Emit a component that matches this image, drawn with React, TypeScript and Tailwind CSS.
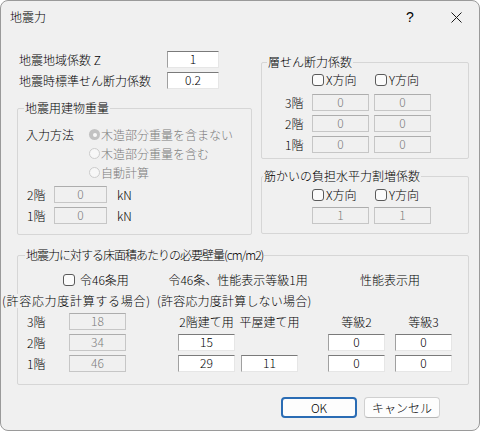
import React from "react";

const font = "font-['Noto_Sans_CJK_JP','Noto_Sans_CJK_SC',sans-serif]";

function Edit({ value, className = "", disabled = false }: { value: string; className?: string; disabled?: boolean }) {
  const look = disabled
    ? "bg-[#f0f0f0] border border-[#c6c6c6] border-t-[#adadad] text-[#7c7c7c]"
    : "bg-white border border-t-[#7a7a7a] border-l-[#a0a0a0] border-r-[#e6e6e6] border-b-[#e6e6e6] text-black";
  return (
    <div className={`h-[17px] flex items-center justify-center pb-[2px] leading-[14px] ${look} ${className}`}>
      {value}
    </div>
  );
}

function Check({ label }: { label: string }) {
  return (
    <div className="flex items-center whitespace-nowrap">
      <span className="w-[12px] h-[12px] rounded-[3px] border border-[#5a5a5a] bg-[#fbfbfb]" />
      <span className="ml-[2px]">{label}</span>
    </div>
  );
}

function Radio({ label, checked = false }: { label: string; checked?: boolean }) {
  return (
    <div className="flex items-center h-[19px]">
      {checked ? (
        <span className="w-[11px] h-[11px] rounded-full bg-[#c2c2c2] flex items-center justify-center">
          <span className="w-[4px] h-[4px] rounded-full bg-[#f8f8f8]" />
        </span>
      ) : (
        <span className="w-[11px] h-[11px] rounded-full border border-[#cccccc] bg-[#f7f7f7]" />
      )}
      <span className="ml-[1px] text-[#7c7c7c]">{label}</span>
    </div>
  );
}

function Group({ title, titleCls, className, children }: { title: string; titleCls: string; className: string; children: React.ReactNode }) {
  return (
    <div className={`relative border border-[#d6d6d6] rounded-[2px] ${className}`}>
      <span className={`absolute top-[-8px] px-[1px] bg-[#f0f0f0] leading-[14px] whitespace-nowrap ${titleCls}`}>{title}</span>
      {children}
    </div>
  );
}

export default function App() {
  return (
    <div className={`w-[480px] h-[431px] bg-white ${font} font-light text-[12px] leading-[14px] text-black`}>
      <div className="w-full h-full rounded-[8px] border border-[#9a9a9a] bg-[#f0f0f0] overflow-hidden flex flex-col">
        {/* title bar */}
        <div className="h-[32px] shrink-0 flex items-center">
          <span className="ml-[9px]">地震力</span>
          <div className="ml-auto flex h-[30px]">
            <div className="w-[46px] flex items-center justify-center font-['Liberation_Sans',sans-serif] text-[14px]">?</div>
            <div className="w-[46px] flex items-center justify-center">
              <svg width="11" height="11" viewBox="0 0 11 11">
                <path d="M0.5 0.5 L10.5 10.5 M10.5 0.5 L0.5 10.5" stroke="#1a1a1a" strokeWidth="1" fill="none" />
              </svg>
            </div>
          </div>
        </div>

        {/* upper part */}
        <div className="flex ml-[16px]">
          <div className="w-[235px] flex flex-col">
            <div className="mt-[18px] flex items-center h-[17px]">
              <span className="w-[150px] pl-[2px] whitespace-nowrap">地震地域係数 Z</span>
              <Edit value="1" className="w-[52px]" />
            </div>
            <div className="mt-[4px] flex items-center h-[17px]">
              <span className="w-[150px] pl-[2px] whitespace-nowrap">地震時標準せん断力係数</span>
              <Edit value="0.2" className="w-[52px]" />
            </div>

            <Group title="地震用建物重量" titleCls="left-[6px]" className="mt-[19px] h-[127px]">
              <div className="pt-[16px] pl-[8px]">
                <div className="flex items-center">
                  <span className="w-[63px]">入力方法</span>
                  <Radio label="木造部分重量を含まない" checked />
                </div>
                <div className="pl-[63px]">
                  <Radio label="木造部分重量を含む" />
                  <Radio label="自動計算" />
                </div>
              </div>
              <div className="mt-[4px] flex flex-col gap-[4px]">
                {["2階", "1階"].map((f) => (
                  <div key={f} className="flex items-center h-[17px]">
                    <span className="w-[36px] pl-[9px]">{f}</span>
                    <Edit disabled value="0" className="w-[53px]" />
                    <span className="ml-[10px]">kN</span>
                  </div>
                ))}
              </div>
            </Group>
          </div>

          <div className="ml-[9px] w-[208px] flex flex-col">
            <Group title="層せん断力係数" titleCls="left-[5px]" className="mt-[29px] h-[97px]">
              <div className="pt-[8px]">
                <div className="flex items-center h-[18px] pl-[50px]">
                  <div className="w-[63px]">
                    <Check label="X方向" />
                  </div>
                  <Check label="Y方向" />
                </div>
                <div className="mt-[5px] flex flex-col gap-[4px]">
                  {["3階", "2階", "1階"].map((f) => (
                    <div key={f} className="flex items-center h-[17px]">
                      <span className="w-[50px] pl-[23px]">{f}</span>
                      <Edit disabled value="0" className="w-[57px]" />
                      <Edit disabled value="0" className="w-[57px] ml-[5px]" />
                    </div>
                  ))}
                </div>
              </div>
            </Group>

            <Group title="筋かいの負担水平力割増係数" titleCls="left-[1px]" className="mt-[17px] h-[58px]">
              <div className="pt-[9px]">
                <div className="flex items-center h-[18px] pl-[50px]">
                  <div className="w-[63px]">
                    <Check label="X方向" />
                  </div>
                  <Check label="Y方向" />
                </div>
                <div className="mt-[3px] flex items-center h-[17px] pl-[50px]">
                  <Edit disabled value="1" className="w-[57px]" />
                  <Edit disabled value="1" className="w-[57px] ml-[5px]" />
                </div>
              </div>
            </Group>
          </div>
        </div>

        {/* required wall amount */}
        <Group title="地震力に対する床面積あたりの必要壁量(cm/m2)" titleCls="left-[7px] tracking-[-1px]" className="mt-[20px] ml-[16px] w-[452px] h-[130px] shrink-0">
          <div className="pt-[13px]">
            <div className="flex items-center h-[21px]">
              <div className="w-[160px] pl-[45px] flex items-center">
                <span className="w-[12px] h-[12px] rounded-[3px] border border-[#5a5a5a] bg-[#fbfbfb]" />
                <span className="ml-[5px]">令46条用</span>
              </div>
              <div className="w-[120px] flex justify-center whitespace-nowrap">令46条、性能表示等級1用</div>
              <div className="w-[30px]" />
              <div className="w-[124px] flex justify-center whitespace-nowrap">性能表示用</div>
            </div>
            <div className="flex items-center h-[21px] ml-[-16px]">
              <span className="w-[155px] whitespace-nowrap bg-[#f0f0f0] tracking-[0.7px]">(許容応力度計算する場合)</span>
              <span className="whitespace-nowrap tracking-[0.2px]">(許容応力度計算しない場合)</span>
            </div>
            <div className="grid grid-cols-[51px_57px_52px_57px_6px_57px_30px_57px_10px_57px] grid-rows-[21px_21px_21px] items-center">
              <span className="pl-[9px]">3階</span>
              <Edit disabled value="18" />
              <span />
              <span className="flex justify-center whitespace-nowrap">2階建て用</span>
              <span />
              <span className="flex justify-center whitespace-nowrap">平屋建て用</span>
              <span />
              <span className="flex justify-center whitespace-nowrap">等級2</span>
              <span />
              <span className="flex justify-center whitespace-nowrap">等級3</span>

              <span className="pl-[9px]">2階</span>
              <Edit disabled value="34" />
              <span />
              <Edit value="15" />
              <span />
              <span />
              <span />
              <Edit value="0" />
              <span />
              <Edit value="0" />

              <span className="pl-[9px]">1階</span>
              <Edit disabled value="46" />
              <span />
              <Edit value="29" />
              <span />
              <Edit value="11" />
              <span />
              <Edit value="0" />
              <span />
              <Edit value="0" />
            </div>
          </div>
        </Group>

        {/* buttons */}
        <div className="mt-[12px] flex justify-end gap-[7px] pr-[39px]">
          <button className="w-[76px] h-[21px] rounded-[4px] border-2 border-[#2a6cb4] bg-[#fdfdfd] flex items-center justify-center leading-[14px]">OK</button>
          <button className="w-[76px] h-[21px] rounded-[4px] border border-[#d0d0d0] border-b-[#b5b5b5] bg-[#fdfdfd] flex items-center justify-center leading-[14px]">キャンセル</button>
        </div>
      </div>
    </div>
  );
}
